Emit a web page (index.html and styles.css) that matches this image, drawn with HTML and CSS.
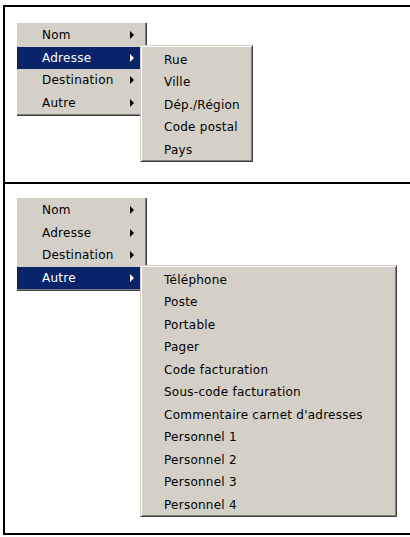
FILE: index.html
```html
<!DOCTYPE html>
<html lang="fr">
<head>
<meta charset="utf-8">
<title>Menus</title>
<link rel="stylesheet" href="styles.css">
</head>
<body>
<div class="frame">
  <div class="panel panel-top">
    <div class="menu main">
      <div class="item"><span class="label">Nom</span><i class="arrow"></i></div>
      <div class="item active"><span class="label">Adresse</span><i class="arrow"></i>
        <div class="menu sub sub-addr">
          <div class="item"><span class="label">Rue</span></div>
          <div class="item"><span class="label">Ville</span></div>
          <div class="item"><span class="label">Dép./Région</span></div>
          <div class="item"><span class="label">Code postal</span></div>
          <div class="item"><span class="label">Pays</span></div>
        </div>
      </div>
      <div class="item"><span class="label">Destination</span><i class="arrow"></i></div>
      <div class="item"><span class="label">Autre</span><i class="arrow"></i></div>
    </div>
  </div>
  <div class="panel panel-bottom">
    <div class="menu main">
      <div class="item"><span class="label">Nom</span><i class="arrow"></i></div>
      <div class="item"><span class="label">Adresse</span><i class="arrow"></i></div>
      <div class="item"><span class="label">Destination</span><i class="arrow"></i></div>
      <div class="item active"><span class="label">Autre</span><i class="arrow"></i>
        <div class="menu sub sub-other">
          <div class="item"><span class="label">Téléphone</span></div>
          <div class="item"><span class="label">Poste</span></div>
          <div class="item"><span class="label">Portable</span></div>
          <div class="item"><span class="label">Pager</span></div>
          <div class="item"><span class="label">Code facturation</span></div>
          <div class="item"><span class="label">Sous-code facturation</span></div>
          <div class="item"><span class="label">Commentaire carnet d'adresses</span></div>
          <div class="item"><span class="label">Personnel 1</span></div>
          <div class="item"><span class="label">Personnel 2</span></div>
          <div class="item"><span class="label">Personnel 3</span></div>
          <div class="item"><span class="label">Personnel 4</span></div>
        </div>
      </div>
    </div>
  </div>
</div>
</body>
</html>
```
FILE: styles.css
```css
html, body {
  margin: 0;
  padding: 0;
  background: #ffffff;
  overflow: hidden;
}

body {
  font-family: "DejaVu Sans", "Liberation Sans", sans-serif;
  font-size: 12px;
  letter-spacing: 0.25px;
  color: #000000;
}

.frame {
  margin: 5px 0 0 3px;
  width: 420px;
  border-left: 2px solid #000000;
  border-top: 2px solid #000000;
}

.panel {
  border-bottom: 2px solid #000000;
  box-sizing: border-box;
  padding-left: 12px;
}

.panel-top {
  height: 177px;
  padding-top: 16px;
}

.panel-bottom {
  height: 351px;
  padding-top: 14px;
}

.menu {
  background: #d4d0c8;
  box-sizing: border-box;
}

.main {
  width: 130px;
  padding: 1px 0 1px 0;
  border-right: 1px solid #404040;
  border-bottom: 1px solid #404040;
  box-shadow: inset -1px -1px 0 #808080;
}

.item {
  position: relative;
  display: flex;
  align-items: center;
  height: 22.5px;
  line-height: 22.5px;
  white-space: nowrap;
}

.main .item {
  padding-left: 25px;
  margin-right: 1px;
}

.main .item.active {
  background: #0a246a;
  color: #ffffff;
}

.label {
  flex: 1;
}

.arrow {
  display: block;
  width: 0;
  height: 0;
  margin-right: 11px;
  border-left: 4px solid #000000;
  border-top: 4px solid transparent;
  border-bottom: 4px solid transparent;
}

.active .arrow {
  border-left-color: #ffffff;
}

.sub {
  position: absolute;
  left: 123px;
  top: -2px;
  padding: 3px 0 0 0;
  color: #000000;
  border-top: 1px solid #d4d0c8;
  border-left: 1px solid #d4d0c8;
  border-right: 1px solid #404040;
  border-bottom: 1px solid #404040;
  box-shadow: inset 1px 1px 0 #ffffff, inset -1px -1px 0 #808080;
  z-index: 2;
}

.sub .item {
  padding-left: 23px;
}

.sub-addr {
  width: 113px;
}

.sub-other {
  width: 257px;
}
```
